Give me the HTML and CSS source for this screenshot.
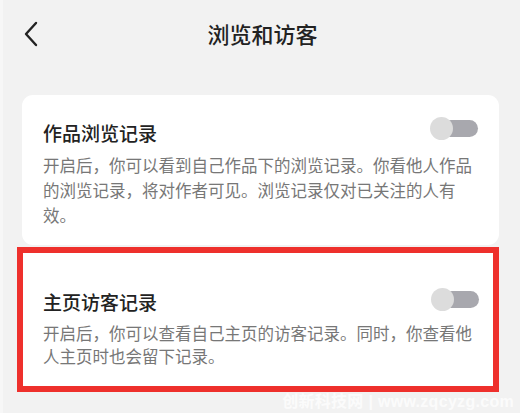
FILE: index.html
```html
<!DOCTYPE html>
<html lang="zh-CN">

<head>
    <meta charset="UTF-8">
    <meta name="viewport" content="width=device-width, initial-scale=1.0">
    <title>浏览和访客</title>
    <link rel="stylesheet" href="styles.css">
</head>

<body>

    <div class="Pantalla">
        <div class="Cabecera">
            <svg class="volver" width="16" height="26" viewBox="0 0 16 26">
                <polyline points="13,2 3,13 13,24" fill="none" stroke="#222" stroke-width="2.4" stroke-linecap="round" stroke-linejoin="round" />
            </svg>
            <h1>浏览和访客</h1>
        </div>

        <div class="Tarjeta">
            <div class="fila">
                <h2>作品浏览记录</h2>
                <span class="interruptor"></span>
            </div>
            <p>开启后，你可以看到自己作品下的浏览记录。你看他人作品的浏览记录，将对作者可见。浏览记录仅对已关注的人有效。</p>
        </div>

        <div class="Marcado">
            <div class="Tarjeta segunda">
                <div class="fila">
                    <h2>主页访客记录</h2>
                    <span class="interruptor"></span>
                </div>
                <p>开启后，你可以查看自己主页的访客记录。同时，你查看他人主页时也会留下记录。</p>
            </div>
        </div>

        <div class="marca">创新科技网 | www.zqcyzg.com</div>
    </div>

</body>

</html>
```
FILE: styles.css
```css
body {
    font-family: 'Noto Sans CJK SC', 'Noto Sans', sans-serif;
    background-color: #f2f2f2;
    margin: 0;
}


.Pantalla {
    position: relative;
    width: 520px;
    height: 413px;
    overflow: hidden;
    border-left: 3px solid #f7f7f7;
    box-sizing: border-box;
}


.Cabecera {
    position: relative;
    height: 66px;
    display: flex;
    justify-content: center;
    align-items: flex-start;
}


.volver {
    position: absolute;
    left: 20px;
    top: 21px;
}


h1 {
    margin: 18px 0 0 0;
    font-size: 22px;
    line-height: 30px;
    font-weight: 500;
    color: #222;
    padding-left: 2px;
}


.Tarjeta {
    background-color: #fff;
    margin: 29px 21px 0 19px;
    border-radius: 11px;
    padding: 25px 14px 17px 21px;
}


.fila {
    display: flex;
    justify-content: space-between;
    align-items: center;
}


h2 {
    margin: 0;
    font-size: 19px;
    line-height: 26px;
    font-weight: 500;
    color: #222;
}


p {
    margin: 7px 0 0 0;
    font-size: 16.5px;
    line-height: 25px;
    color: #777;
}


.interruptor {
    position: relative;
    width: 48px;
    height: 22px;
    margin-top: -10px;
    margin-right: 7px;
}


.interruptor::before {
    content: "";
    position: absolute;
    left: 8px;
    right: 0;
    top: 3px;
    height: 17px;
    border-radius: 9px;
    background-color: #a8a8ae;
}


.interruptor::after {
    content: "";
    position: absolute;
    left: 0;
    top: 0;
    width: 23px;
    height: 23px;
    border-radius: 50%;
    background-color: #dcdcdc;
}


.Marcado {
    margin: 2px 21px 0 14px;
    border: 6px solid #ee302c;
}


.segunda {
    margin: 0;
    border-radius: 0;
    padding: 36px 6px 18px 20px;
}


.segunda .interruptor {
    margin-right: 8px;
    margin-top: -6px;
}


.segunda p {
    line-height: 23px;
}


.marca {
    position: absolute;
    right: 6px;
    bottom: 1px;
    font-family: 'Liberation Sans', 'Noto Sans CJK SC', sans-serif;
    font-size: 16px;
    font-weight: bold;
    color: rgba(255, 255, 255, 0.75);
    letter-spacing: 0.3px;
}
```
